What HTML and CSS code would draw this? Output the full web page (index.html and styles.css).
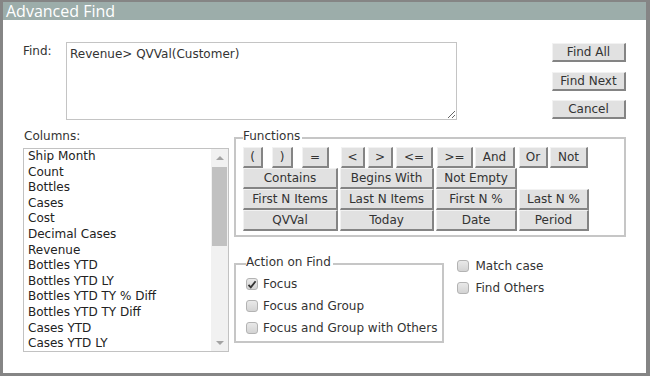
FILE: index.html
```html
<!DOCTYPE html>
<html lang="en">
<head>
    <meta charset="UTF-8">
    <title>Advanced Find</title>
    <link rel="stylesheet" href="styles.css">
</head>
<body>

    <div class="dialogo">
        <div class="titulo">Advanced Find</div>

        <div class="cuerpo">
            <div class="fila-buscar">
                <label class="etiqueta-buscar" for="buscar">Find:</label>
                <textarea id="buscar" class="caja-buscar">Revenue> QVVal(Customer)</textarea>
                <div class="acciones">
                    <button class="boton boton-accion">Find All</button>
                    <button class="boton boton-accion">Find Next</button>
                    <button class="boton boton-accion">Cancel</button>
                </div>
            </div>

            <div class="fila-inferior">
                <div class="columnas">
                    <div class="etiqueta-columnas">Columns:</div>
                    <div class="lista">
                        <ul class="lista-items">
                            <li>Ship Month</li>
                            <li>Count</li>
                            <li>Bottles</li>
                            <li>Cases</li>
                            <li>Cost</li>
                            <li>Decimal Cases</li>
                            <li>Revenue</li>
                            <li>Bottles YTD</li>
                            <li>Bottles YTD LY</li>
                            <li>Bottles YTD TY % Diff</li>
                            <li>Bottles YTD TY Diff</li>
                            <li>Cases YTD</li>
                            <li>Cases YTD LY</li>
                        </ul>
                        <div class="barra">
                            <div class="flecha"><span class="tri-arriba"></span></div>
                            <div class="pista"><div class="pulgar"></div></div>
                            <div class="flecha"><span class="tri-abajo"></span></div>
                        </div>
                    </div>
                </div>

                <div class="panel">
                    <fieldset class="grupo funciones">
                        <legend>Functions</legend>
                        <div class="rejilla">
                            <div class="celda celda-1">
                                <button class="boton b-20">(</button>
                                <button class="boton b-21">)</button>
                                <button class="boton b-27">=</button>
                            </div>
                            <div class="celda celda-2">
                                <button class="boton b-24">&lt;</button>
                                <button class="boton b-25">&gt;</button>
                                <button class="boton b-37">&lt;=</button>
                            </div>
                            <div class="celda celda-3">
                                <button class="boton b-36">&gt;=</button>
                                <button class="boton b-40">And</button>
                            </div>
                            <div class="celda celda-4">
                                <button class="boton b-29">Or</button>
                                <button class="boton b-38">Not</button>
                            </div>

                            <button class="boton">Contains</button>
                            <button class="boton">Begins With</button>
                            <button class="boton">Not Empty</button>
                            <span></span>

                            <button class="boton">First N Items</button>
                            <button class="boton">Last N Items</button>
                            <button class="boton">First N %</button>
                            <button class="boton">Last N %</button>

                            <button class="boton">QVVal</button>
                            <button class="boton">Today</button>
                            <button class="boton">Date</button>
                            <button class="boton">Period</button>
                        </div>
                    </fieldset>

                    <div class="fila-opciones">
                        <fieldset class="grupo accion">
                            <legend>Action on Find</legend>
                            <label class="opcion"><span class="casilla marcada"><svg width="10" height="9" viewBox="0 0 10 9"><path d="M1.5 4.8 L3.8 7.3 L8.6 1.2" fill="none" stroke="#333" stroke-width="1.8"/></svg></span>Focus</label>
                            <label class="opcion"><span class="casilla"></span>Focus and Group</label>
                            <label class="opcion"><span class="casilla"></span>Focus and Group with Others</label>
                        </fieldset>
                        <div class="extras">
                            <label class="opcion opcion-extra"><span class="casilla"></span>Match case</label>
                            <label class="opcion opcion-extra"><span class="casilla"></span>Find Others</label>
                        </div>
                    </div>
                </div>
            </div>
        </div>
    </div>

</body>
</html>
```

FILE: styles.css
```css
body {
    margin: 0;
    font-family: "DejaVu Sans", Verdana, sans-serif;
    font-size: 12px;
    color: #333;
}
.dialogo {
    width: 650px;
    height: 376px;
    box-sizing: border-box;
    border-style: solid;
    border-color: #858585;
    border-width: 2px 4px 3px 3px;
    background: white;
}
.titulo {
    height: 18px;
    line-height: 18px;
    padding-left: 3px;
    background: #9cadaa;
    color: white;
    font-family: "Open Sans", sans-serif;
    font-size: 16px;
}
.cuerpo {
    padding: 22px 20px 0 20px;
}
.fila-buscar {
    display: flex;
    align-items: flex-start;
}
.etiqueta-buscar {
    width: 43px;
    margin-top: 2px;
}
.caja-buscar {
    width: 391px;
    height: 78px;
    box-sizing: border-box;
    margin: 0;
    padding: 4px 3px;
    border: 1px solid #c4c4c4;
    font-family: "DejaVu Sans", Verdana, sans-serif;
    font-size: 12px;
    color: #333;
}
.acciones {
    margin-left: auto;
    margin-top: 1px;
    display: flex;
    flex-direction: column;
    gap: 9.5px;
}
.boton {
    height: 20px;
    box-sizing: border-box;
    margin: 0;
    padding: 0;
    background: #e1e1e1;
    border-style: solid;
    border-width: 1px 2px 2px 1px;
    border-color: #f2f2f2 #848484 #848484 #f2f2f2;
    font-family: "DejaVu Sans", Verdana, sans-serif;
    font-size: 12px;
    color: #333;
    line-height: 16px;
}
.boton-accion {
    width: 74px;
    height: 19px;
}
.fila-inferior {
    display: flex;
    margin-top: 9px;
}
.columnas {
    width: 206px;
}
.etiqueta-columnas {
    line-height: 14px;
    padding-left: 1px;
}
.lista {
    display: flex;
    height: 204px;
    margin-top: 5px;
    box-sizing: border-box;
    border: 1px solid #c2c2c2;
}
.lista-items {
    flex: 1;
    list-style: none;
    margin: 0;
    padding: 0 0 0 4px;
    overflow: hidden;
    color: #222;
}
.lista-items li {
    line-height: 15.6px;
    white-space: nowrap;
}
.barra {
    width: 17px;
    display: flex;
    flex-direction: column;
    background: #f1f1f1;
}
.flecha {
    height: 17px;
    display: flex;
    align-items: center;
    justify-content: center;
}
.tri-arriba {
    border-left: 4px solid transparent;
    border-right: 4px solid transparent;
    border-bottom: 4px solid #a3a3a3;
}
.tri-abajo {
    border-left: 4px solid transparent;
    border-right: 4px solid transparent;
    border-top: 4px solid #a3a3a3;
}
.pista {
    flex: 1;
}
.pulgar {
    height: 79px;
    margin: 1px 1px 0 1px;
    background: #c1c1c1;
}
.panel {
    flex: 1;
    margin-left: 5px;
}
.grupo {
    margin: 0;
    min-width: 0;
    border: 2px solid #c6c6c6;
}
.grupo legend {
    padding: 0 2px 4px 0;
    line-height: 14px;
}
.funciones {
    padding: 0 7px 4px 7px;
}
.rejilla {
    display: grid;
    grid-template-columns: 95px 94px 81px 70px;
    grid-auto-rows: 21px;
    column-gap: 2px;
}
.celda {
    display: flex;
}
.celda .boton {
    height: 21px;
}
.rejilla > .boton {
    height: 21px;
}
.celda-1 {
    gap: 9px;
}
.celda-2 {
    gap: 3px;
    padding-left: 1px;
}
.celda-3 {
    gap: 2px;
    padding-left: 1px;
}
.celda-4 {
    gap: 2px;
}
.b-20 { width: 20px; }
.b-21 { width: 21px; }
.b-24 { width: 24px; }
.b-25 { width: 25px; }
.b-27 { width: 27px; }
.b-29 { width: 29px; }
.b-36 { width: 36px; }
.b-37 { width: 37px; }
.b-38 { width: 38px; }
.b-40 { width: 40px; }
.fila-opciones {
    display: flex;
    align-items: flex-start;
    margin-top: 18px;
}
.accion {
    padding: 0 5px 2px 10px;
}
.opcion {
    display: flex;
    align-items: center;
    height: 22px;
    white-space: nowrap;
}
.casilla {
    width: 12px;
    height: 12px;
    box-sizing: border-box;
    margin-right: 5px;
    border: 1px solid #b3b3b3;
    border-radius: 3px;
    background: linear-gradient(#e9e9e9, #d3d3d3);
    display: flex;
    align-items: center;
    justify-content: center;
}
.extras {
    margin-left: 13px;
    margin-top: 0;
}
.opcion-extra .casilla {
    margin-right: 6px;
}
```
